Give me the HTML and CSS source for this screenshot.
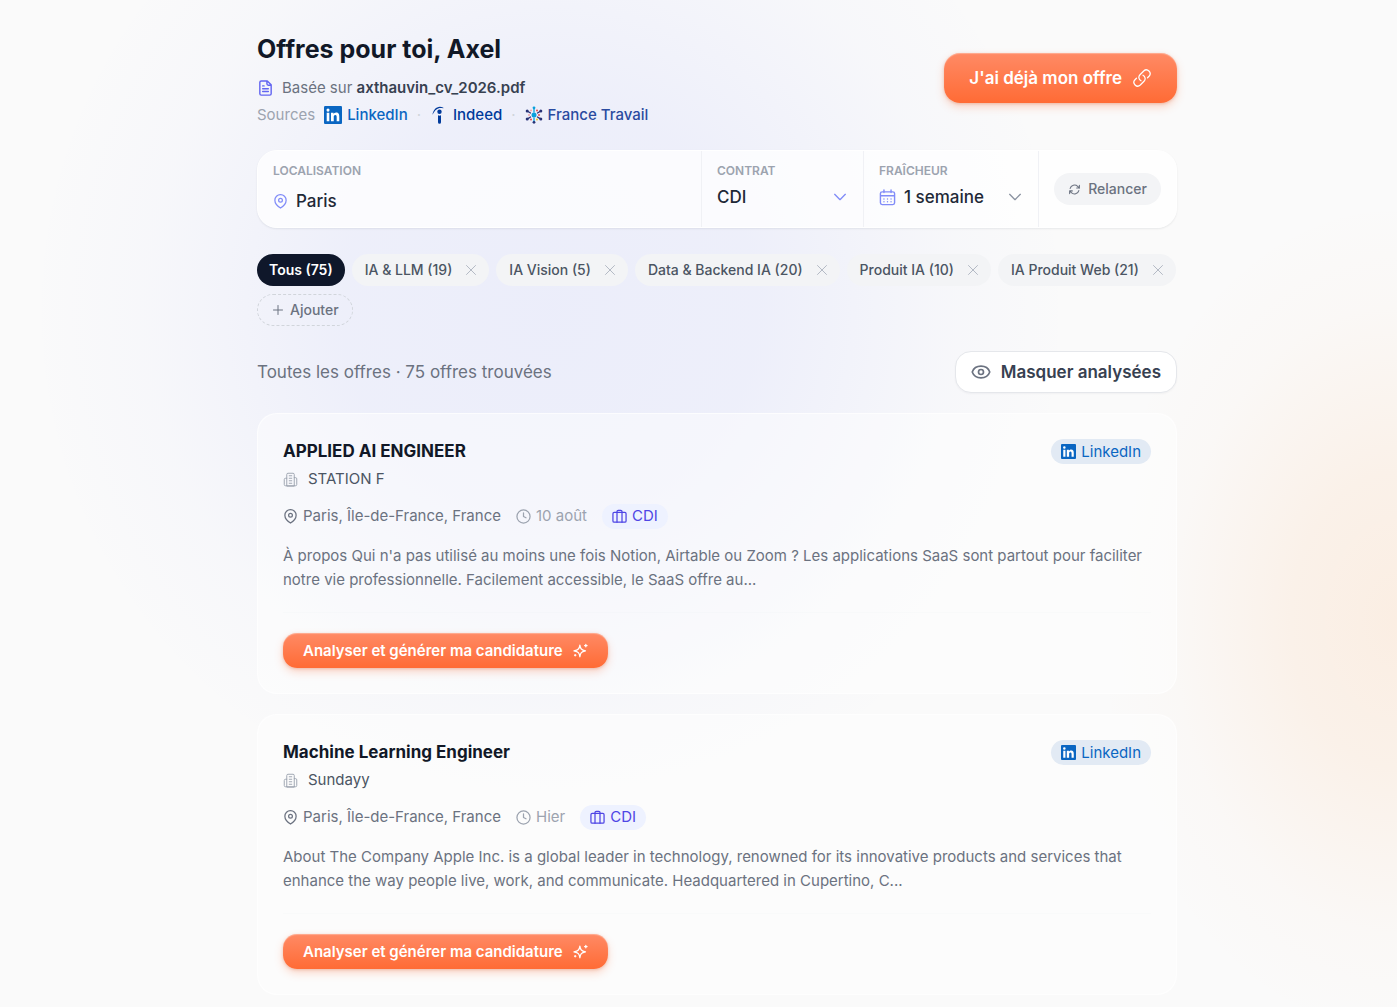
FILE: index.html
```html
<!DOCTYPE html>
<html lang="fr">
<head>
<meta charset="utf-8">
<meta name="viewport" content="width=device-width, initial-scale=1">
<title>Offres pour toi</title>
<link rel="stylesheet" href="styles.css">
</head>
<body>
<svg class="sprite" aria-hidden="true">
  <symbol id="linkedin" viewBox="0 0 24 24"><rect width="24" height="24" rx="1.5" fill="#0a66c2"/><path fill="#fff" d="M3.6 9h3.5v11.4H3.6zM5.35 3.4a2.05 2.05 0 1 1 0 4.1 2.05 2.05 0 0 1 0-4.1zM9.3 9h3.4v1.6c.5-.9 1.7-1.9 3.4-1.9 3.6 0 4.3 2.4 4.3 5.5v6.2h-3.5v-5.5c0-1.3 0-3-1.8-3s-2.1 1.4-2.1 2.9v5.6H9.3z"/></symbol>
  <symbol id="pin" viewBox="0 0 24 24"><path d="M15 10a3 3 0 1 1-6 0 3 3 0 0 1 6 0z"/><path d="M21 10c0 7-9 12.500-9 12.500S3 17 3 10a9 9 0 1 1 18 0z"/></symbol>
  <symbol id="building" viewBox="0 0 24 24"><path d="M6 22V4a2 2 0 0 1 2-2h8a2 2 0 0 1 2 2v18zM6 10H4a2 2 0 0 0-2 2v8a2 2 0 0 0 2 2h16a2 2 0 0 0 2-2V11a2 2 0 0 0-2-2h-2M10 6h4M10 10h4M10 14h4M10 18h4"/></symbol>
  <symbol id="clock" viewBox="0 0 24 24"><circle cx="12" cy="12" r="10.500"/><path d="M12 6v6l4 2"/></symbol>
  <symbol id="case" viewBox="0 0 24 24"><rect x="1.500" y="5.500" width="21" height="15.500" rx="2"/><path d="M8 21V4a2 2 0 0 1 2-2h4a2 2 0 0 1 2 2v17"/></symbol>
  <symbol id="sparkles" viewBox="0 0 24 24"><path d="M11 3.500c.8 5.800 2.400 7.700 9 9-6.600 1.300-8.200 3.200-9 9.500-.8-6.300-2.400-8.200-9.500-9.500 7.100-1.300 8.700-3.200 9.500-9zM20.500 2v4M18.500 4h4M3.500 18.500v2M2.500 19.500h2"/></symbol>
  <symbol id="cross" viewBox="0 0 24 24"><path d="M3 3l18 18M21 3L3 21"/></symbol>
  <symbol id="chevron" viewBox="0 0 24 24"><path d="M4 8l8 8 8-8"/></symbol>
</svg>

<main class="page">
  <header class="header">
    <div class="intro">
      <h1 class="title">Offres pour toi, Axel</h1>
      <p class="based">
        <svg class="icon icon-doc" viewBox="0 0 24 24"><path d="M14.500 2H6a2 2 0 0 0-2 2v16a2 2 0 0 0 2 2h12a2 2 0 0 0 2-2V7.500zM14 2v4a2 2 0 0 0 2 2h4M8 9h2M8 13h8M8 17h8"/></svg>
        <span>Basée sur <strong>axthauvin_cv_2026.pdf</strong></span>
      </p>
      <ul class="sources">
        <li>Sources</li>
        <li class="source source-linkedin"><svg class="brand"><use href="#linkedin"/></svg>LinkedIn</li>
        <li class="dot">·</li>
        <li class="source source-indeed"><svg class="brand" viewBox="0 0 18 18"><circle cx="9.500" cy="5.800" r="2.200" fill="#003a9b"/><path fill="#003a9b" d="M8 9.300c1 .5 2 .5 3 0v6.900a1.500 1.500 0 0 1-3 0z"/><path fill="#003a9b" d="M2.600 8C3.300 3.500 7.500-1.200 13 1.400c.5.300.6.900.1.900C8.500.8 5 3.600 3 8c-.2.500-.5.500-.4 0z"/></svg>Indeed</li>
        <li class="dot">·</li>
        <li class="source source-ft"><svg class="brand" viewBox="0 0 18 18"><g stroke-width="1.300" stroke-linecap="round"><path stroke="#283276" d="M5.500 7L2.600 5.200M12.500 7l2.900-1.800M5.500 11l-2.900 1.900M12.500 11l2.900 1.900"/><path stroke="#0aa0dc" d="M9 2v4M9 12v4"/></g><circle cx="9" cy="9" r="2.500" fill="#0aa0dc"/><g fill="#283276"><circle cx="2.200" cy="5" r="1.500"/><circle cx="15.800" cy="5" r="1.500"/><circle cx="2.200" cy="13" r="1.500"/><circle cx="15.800" cy="13" r="1.500"/><circle cx="9" cy="16.300" r="1.400"/></g><circle cx="9" cy="1.800" r="1.400" fill="#0aa0dc"/><g fill="#e5484d"><circle cx="6" cy="13.400" r="1"/><circle cx="12" cy="4.600" r="1"/><circle cx="14" cy="9" r="1"/></g><g fill="#f2a3a8"><circle cx="6" cy="4.600" r="1"/><circle cx="4" cy="9" r="1"/></g><circle cx="12" cy="13.400" r="1" fill="#f5c518"/></svg>France Travail</li>
      </ul>
    </div>
    <button class="cta cta-large" type="button">J'ai déjà mon offre
      <svg class="icon" viewBox="0 0 24 24"><path d="M13.190 8.690a4.500 4.500 0 0 1 1.240 7.240l-4.500 4.500a4.500 4.500 0 0 1-6.360-6.360l1.750-1.760m13.360-.62l1.750-1.760a4.500 4.500 0 0 0-6.360-6.360l-4.500 4.500a4.500 4.500 0 0 0 1.240 7.240"/></svg>
    </button>
  </header>

  <form class="filters">
    <div class="field field-place">
      <label for="place">Localisation</label>
      <div class="control"><svg class="icon icon-pin"><use href="#pin"/></svg><input id="place" type="text" value="Paris"></div>
    </div>
    <div class="field field-contract">
      <label for="contract">Contrat</label>
      <div class="control"><select id="contract"><option>CDI</option></select><svg class="icon icon-chevron"><use href="#chevron"/></svg></div>
    </div>
    <div class="field field-fresh">
      <label for="fresh">Fraîcheur</label>
      <div class="control"><svg class="icon icon-cal" viewBox="0 0 24 24"><path d="M7 1.500V5M17 1.500V5M2 18V6.500A2.500 2.500 0 0 1 4.500 4h15A2.500 2.500 0 0 1 22 6.500V19.500a2.500 2.500 0 0 1-2.500 2.500h-15A2.500 2.500 0 0 1 2 19.500zM2 9.500h20M7 14h.01M12 14h.01M17 14h.01M7 18h.01M12 18h.01M17 18h.01"/></svg><select id="fresh"><option>1 semaine</option></select><svg class="icon icon-chevron icon-grey"><use href="#chevron"/></svg></div>
    </div>
    <div class="field-action">
      <button class="refresh" type="button"><svg class="icon" viewBox="0 0 24 24"><path d="M16 9.350h5V4.400M3 19.600v-5h5M3 14.600l3.200 3.200a8.250 8.250 0 0 0 13.800-3.700M4 9.900a8.250 8.250 0 0 1 13.800-3.700L21 9.350"/></svg>Relancer</button>
    </div>
  </form>

  <div class="chips">
    <button class="chip chip-on" type="button">Tous (75)</button>
    <button class="chip" type="button">IA &amp; LLM (19)<svg class="icon"><use href="#cross"/></svg></button>
    <button class="chip" type="button">IA Vision (5)<svg class="icon"><use href="#cross"/></svg></button>
    <button class="chip" type="button">Data &amp; Backend IA (20)<svg class="icon"><use href="#cross"/></svg></button>
    <button class="chip" type="button">Produit IA (10)<svg class="icon"><use href="#cross"/></svg></button>
    <button class="chip" type="button">IA Produit Web (21)<svg class="icon"><use href="#cross"/></svg></button>
    <button class="chip chip-add" type="button"><svg class="icon" viewBox="0 0 24 24"><path d="M12 3v18M3 12h18"/></svg>Ajouter</button>
  </div>

  <div class="results">
    <p class="count">Toutes les offres · 75 offres trouvées</p>
    <button class="toggle" type="button"><svg class="icon" viewBox="0 0 24 24"><path d="M1.500 12C3 7.800 7.200 5 12 5s9 2.800 10.500 7c-1.500 4.200-5.700 7-10.500 7s-9-2.800-10.500-7z"/><circle cx="12" cy="12" r="3"/></svg>Masquer analysées</button>
  </div>

  <section class="offers">
    <article class="offer">
      <div class="offer-head"><h2>APPLIED AI ENGINEER</h2><span class="badge"><svg><use href="#linkedin"/></svg>LinkedIn</span></div>
      <p class="company"><svg class="icon"><use href="#building"/></svg>STATION F</p>
      <div class="meta">
        <span class="place"><svg class="icon"><use href="#pin"/></svg>Paris, Île-de-France, France</span>
        <span class="date"><svg class="icon"><use href="#clock"/></svg>10 août</span>
        <span class="contract"><svg class="icon"><use href="#case"/></svg>CDI</span>
      </div>
      <p class="desc">À propos Qui n'a pas utilisé au moins une fois Notion, Airtable ou Zoom ? Les applications SaaS sont partout pour faciliter notre vie professionnelle. Facilement accessible, le SaaS offre au...</p>
      <footer class="offer-foot"><button class="cta" type="button">Analyser et générer ma candidature<svg class="icon"><use href="#sparkles"/></svg></button></footer>
    </article>
    <article class="offer">
      <div class="offer-head"><h2>Machine Learning Engineer</h2><span class="badge"><svg><use href="#linkedin"/></svg>LinkedIn</span></div>
      <p class="company"><svg class="icon"><use href="#building"/></svg>Sundayy</p>
      <div class="meta">
        <span class="place"><svg class="icon"><use href="#pin"/></svg>Paris, Île-de-France, France</span>
        <span class="date"><svg class="icon"><use href="#clock"/></svg>Hier</span>
        <span class="contract"><svg class="icon"><use href="#case"/></svg>CDI</span>
      </div>
      <p class="desc">About The Company Apple Inc. is a global leader in technology, renowned for its innovative products and services that enhance the way people live, work, and communicate. Headquartered in Cupertino, C...</p>
      <footer class="offer-foot"><button class="cta" type="button">Analyser et générer ma candidature<svg class="icon"><use href="#sparkles"/></svg></button></footer>
    </article>
  </section>
</main>
</body>
</html>
```
FILE: styles.css
```css
* { box-sizing: border-box; margin: 0; padding: 0; }

body {
  min-height: 100vh;
  padding-left: 37px;
  color: #111827;
  font: 400 15px/24px Inter, "Liberation Sans", sans-serif;
  background:
    radial-gradient(ellipse 520px 520px at 550px 310px, rgba(90, 110, 255, .09) 0%, rgba(90, 110, 255, .08) 40%, rgba(90, 110, 255, .02) 78%, rgba(90, 110, 255, 0) 100%),
    radial-gradient(ellipse 300px 420px at 100% 620px, rgba(255, 150, 60, .12) 0%, rgba(255, 150, 60, .09) 35%, rgba(255, 150, 60, .02) 75%, rgba(255, 150, 60, 0) 100%),
    #fafafa;
}

button, input, select { font: inherit; color: inherit; border: 0; background: none; }
button { cursor: pointer; display: inline-flex; align-items: center; justify-content: center; white-space: nowrap; }
ul { list-style: none; }

.sprite { position: absolute; width: 0; height: 0; }

.icon {
  width: 16px;
  height: 16px;
  flex: none;
  fill: none;
  stroke: currentColor;
  stroke-width: 1.5;
  stroke-linecap: round;
  stroke-linejoin: round;
}

.page { max-width: 920px; margin: 0 auto; padding: 29px 0 12px; }

.header { display: flex; justify-content: space-between; align-items: center; }
.title { font-size: 25px; line-height: 40px; font-weight: 700; }
.based { display: flex; align-items: center; gap: 8px; margin-top: 7px; color: #6b7280; }
.based strong { font-weight: 600; color: #374151; }
.icon-doc { width: 17px; height: 18px; stroke-width: 2; color: #6366f1; }
.sources { display: flex; align-items: center; gap: 9px; margin-top: 3px; color: #9ca3af; }
.source { display: flex; align-items: center; gap: 5px; font-weight: 500; }
.source-linkedin { color: #0a66c2; }
.source-indeed { color: #003a9b; }
.source-ft { color: #2a4ba0; }
.brand { width: 18px; height: 18px; }
.dot { color: #d1d5db; }

.cta {
  height: 35px;
  padding: 0 20px;
  gap: 10px;
  color: #fff;
  font-weight: 600;
  border-radius: 14px;
  background: linear-gradient(#ff8a65, #ff6b35);
  box-shadow: 0 4px 8px rgba(255, 107, 53, .25), 0 1px 3px rgba(180, 70, 30, .25), inset 0 1px 1px rgba(255, 255, 255, .3);
}
.cta .icon { width: 15px; height: 15px; stroke-width: 2; }
.cta-large { height: 50px; padding: 0 25px; font-size: 17px; border-radius: 16px; }
.cta-large .icon { width: 20px; height: 20px; stroke-width: 1.5; }

.filters {
  display: grid;
  grid-template-columns: 1fr 162px 175px 137px;
  min-height: 78px;
  margin-top: 23px;
  border: 1px solid #fff;
  border-radius: 20px;
  background: rgba(255, 255, 255, .75);
  box-shadow: 0 1px 2px rgba(15, 23, 42, .08);
}
.field { padding: 12px 15px 8px; border-right: 1px solid #f0f1f5; }
.field label { display: block; font-size: 12px; line-height: 16px; font-weight: 600; text-transform: uppercase; color: #9ca3af; }
.control { display: flex; align-items: center; gap: 8px; height: 26px; margin-top: 5px; color: #818cf8; }
.field-place .control { margin-top: 9px; }
.control input, .control select { flex: 1; min-width: 0; width: 100%; height: 26px; font-size: 17px; font-weight: 500; color: #1f2937; appearance: none; outline: 0; }
.icon-pin { width: 15px; height: 15px; stroke-width: 2; }
.icon-cal { width: 17px; height: 17px; stroke-width: 2; }
.icon-chevron { stroke-width: 2; }
.icon-grey { color: #8b93a1; }
.field-action { display: flex; align-items: center; justify-content: center; }
.refresh { height: 32px; padding: 0 14px; gap: 7px; font-size: 14px; font-weight: 500; color: #6b7280; border-radius: 16px; background: #f3f4f6; }
.refresh .icon { width: 13px; height: 13px; stroke-width: 2; }

.chips { display: flex; flex-wrap: wrap; gap: 8px 7px; margin-top: 26px; }
.chip { height: 32px; padding: 0 12px 0 13px; gap: 13px; font-size: 14px; font-weight: 500; color: #4b5563; border-radius: 16px; background: #f3f4f6; }
.chip .icon { width: 12px; height: 12px; stroke-width: 2; color: #b4bac5; }
.chip-on { padding: 0 12px; font-weight: 600; color: #fff; background: #0f172a; }
.chip-add { padding: 0 13px 0 14px; gap: 6px; color: #6b7280; border: 1px dashed #d1d5db; background: none; }
.chip-add .icon { color: #6b7280; }

.results { display: flex; justify-content: space-between; align-items: center; margin-top: 25px; }
.count { font-size: 17px; color: #6b7280; }
.toggle { height: 42px; padding: 0 15px; gap: 10px; font-size: 17px; font-weight: 600; color: #374151; border: 1px solid #e5e7eb; border-radius: 16px; background: #fff; box-shadow: 0 1px 2px rgba(15, 23, 42, .04); }
.toggle .icon { width: 20px; height: 20px; stroke-width: 2; color: #6b7280; }

.offers { display: grid; gap: 20px; margin-top: 20px; }
.offer { padding: 25px; border: 1px solid rgba(255, 255, 255, .7); border-radius: 20px; background: rgba(255, 255, 255, .45); }
.offer-head { display: flex; justify-content: space-between; align-items: flex-start; height: 24px; }
.offer h2 { font-size: 17px; line-height: 24px; font-weight: 700; }
.badge { display: flex; align-items: center; gap: 5px; height: 25px; padding: 0 10px; border-radius: 13px; color: #0a66c2; background: #e2eaf4; }
.badge svg { width: 15px; height: 15px; }
.company { display: flex; align-items: center; gap: 10px; margin-top: 4px; color: #4b5563; }
.company .icon { width: 15px; height: 15px; color: #9ca3af; }
.meta { display: flex; align-items: center; gap: 15px; height: 26px; margin-top: 12px; }
.meta span { display: flex; align-items: center; gap: 5px; }
.meta .icon { width: 15px; height: 15px; stroke-width: 2; }
.place { color: #6b7280; }
.date { color: #9ca3af; }
.contract { height: 25px; padding: 0 10px; border-radius: 13px; color: #4f46e5; background: #eef2ff; }
.desc { margin-top: 15px; color: #6b7280; }
.offer-foot { display: flex; margin-top: 20px; padding-top: 20px; border-top: 1px solid rgba(229, 231, 235, .1); }
```
